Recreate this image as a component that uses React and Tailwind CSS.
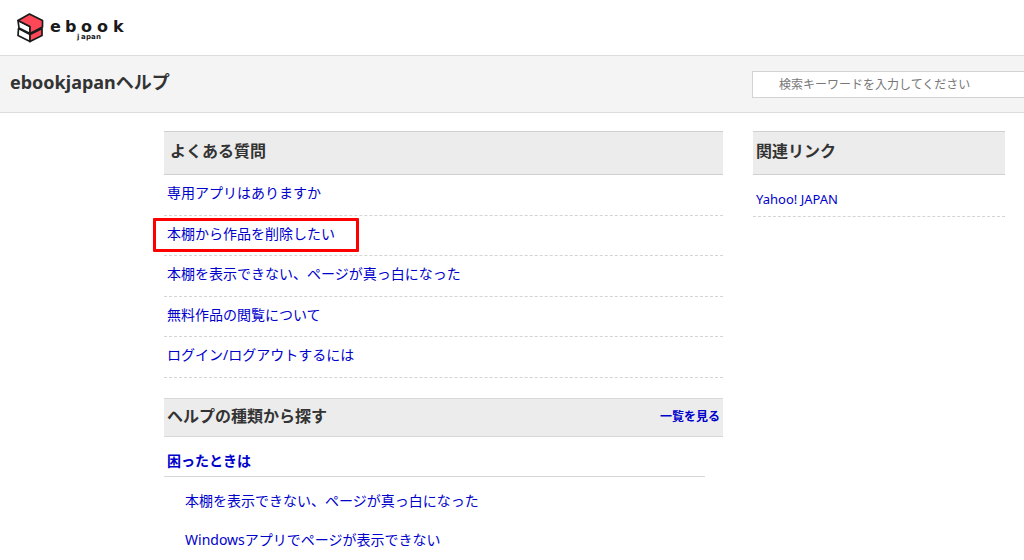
const faqs = [
  '専用アプリはありますか',
  '本棚から作品を削除したい',
  '本棚を表示できない、ページが真っ白になった',
  '無料作品の閲覧について',
  'ログイン/ログアウトするには',
];
const HIGHLIGHTED = 1;

const troubles = [
  '本棚を表示できない、ページが真っ白になった',
  'Windowsアプリでページが表示できない',
];

function Logo() {
  return (
    <svg width="108" height="32" viewBox="0 0 108 32" role="img" aria-label="ebook japan">
      <g stroke="#1a1a1a" strokeWidth="1.7" strokeLinejoin="round" strokeLinecap="round">
        <path d="M2.500 16.500 14 22.500V29.500L2 23.500z" fill="#fff" />
        <path d="M14 22.500 26 16.500V23.500L14 29.500z" fill="#ff4757" />
        <path d="M2 8.500 14 14.500V21.500L3 16z" fill="#fff" />
        <path d="M2 8.500 13.500 2 26.500 8.500V15L14 21.500V14.500z" fill="#ff4757" />
      </g>
      <g fill="#1a1a1a" fontFamily="DejaVu Sans, sans-serif" fontWeight="700">
        <text x="34 49 65 81 97" y="20" fontSize="16">ebook</text>
        <text x="61 65 70 75 80" y="27" fontSize="7">japan</text>
      </g>
    </svg>
  );
}

export default function App() {
  return (
    <div className="min-h-screen bg-white font-['Noto_Sans','Noto_Sans_CJK_JP',sans-serif] text-sm text-[#333]">
      <header>
        <div className="px-4 pt-3 pb-[11px]">
          <a href="#top" className="inline-block align-top"><Logo /></a>
        </div>
        <div className="flex items-center justify-between border-y border-[#dcdcdc] bg-[#f4f4f4] py-[14px] pl-[10px]">
          <h1 className="pb-1 text-lg leading-6 font-bold">ebookjapanヘルプ</h1>
          <input
            type="search"
            aria-label="検索キーワード"
            placeholder="検索キーワードを入力してください"
            className="h-[27px] w-[272px] border border-r-0 border-[#d3d3d3] bg-white pl-[26px] text-xs outline-none placeholder:text-[#777]"
          />
        </div>
      </header>

      <div className="flex items-start gap-[30px] pt-[18px] pr-[19px] pl-[164px]">
        <main className="min-w-0 flex-1">
          <section>
            <h2 className="border-y border-[#d0d0d0] bg-[#ececec] px-[6px] pb-1 text-base leading-[38px] font-bold">よくある質問</h2>
            <ul>
              {faqs.map((label, i) => (
                <li
                  key={label}
                  className="relative border-b border-dashed border-[#d4d4d4] px-[3px] pb-1 leading-[36px] even:leading-[35px]"
                >
                  <a href="#faq" className="text-[#0000cc]">{label}</a>
                  {i === HIGHLIGHTED && (
                    <span className="pointer-events-none absolute top-[2px] -left-[11px] h-[34px] w-[206px] rounded-[1px] border-3 border-[#ff0000]" />
                  )}
                </li>
              ))}
            </ul>
          </section>

          <section className="mt-5">
            <div className="flex items-center justify-between border-y border-[#d8d8d8] bg-[#ececec] px-[3px] pb-[2px] font-bold">
              <h2 className="text-base leading-[35px]">ヘルプの種類から探す</h2>
              <a href="#all" className="text-xs text-[#0000cc]">一覧を見る</a>
            </div>
            <h3 className="mr-[18px] border-b border-[#d8d8d8] px-[3px] pt-2 leading-[31px] font-bold">
              <a href="#trouble" className="text-[#0000cc]">困ったときは</a>
            </h3>
            <ul className="pt-1 pl-[21px] leading-[39px]">
              {troubles.map((label) => (
                <li key={label}><a href="#article" className="text-[#0000cc]">{label}</a></li>
              ))}
            </ul>
          </section>
        </main>

        <aside className="w-[252px] shrink-0">
          <h2 className="border-y border-[#d0d0d0] bg-[#ececec] px-[3px] pb-1 text-base leading-[38px] font-bold">関連リンク</h2>
          <ul>
            <li className="border-b border-dashed border-[#d4d4d4] px-[3px] pt-2 text-[13px] leading-[33px]">
              <a href="#yahoo" className="text-[#0000cc]">Yahoo! JAPAN</a>
            </li>
          </ul>
        </aside>
      </div>
    </div>
  );
}
